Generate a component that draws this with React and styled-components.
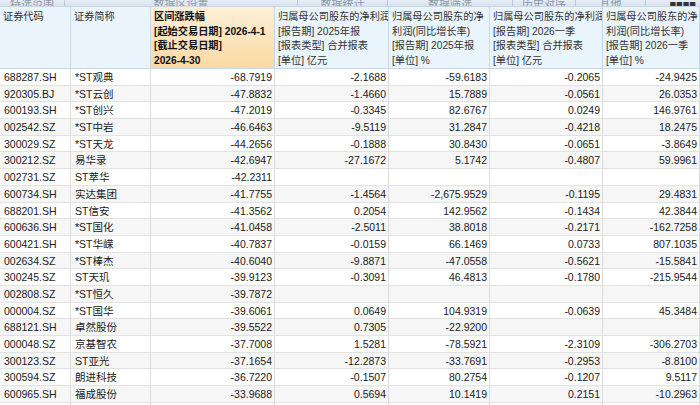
import React from "react";
import styled, { createGlobalStyle } from "styled-components";

const G = createGlobalStyle`
  body { margin: 0; background: #fff; overflow: hidden; }
  * { box-sizing: border-box; }
`;

const cols = "71px 80px 124px 114px 101px 113px 97px";

const Page = styled.div`
  width: 700px; height: 405px; overflow: hidden;
  font-family: "Liberation Sans", "Noto Sans CJK SC", sans-serif;
  font-size: 10.5px; color: #1a1a1a;
`;
const TopBar = styled.div`
  height: 7px; overflow: hidden; display: flex;
  background: linear-gradient(#e6eef7, #d8e3ef);
  border-bottom: 1px solid #c9d6e3;
`;
const TopItem = styled.div`
  width: ${p => p.w}px; border-right: 1px solid #b8c8d9;
  color: #8a98a8; font-size: 11px; line-height: 8px; text-align: center;
  font-weight: ${p => (p.bold ? 700 : 400)};
  ${p => p.bold && "color:#333;text-align:right;padding-right:4px;border-right:none;"}
`;
const Grid = styled.div`
  display: grid; grid-template-columns: ${cols};
`;
const Head = styled.div`
  height: 62px; padding: 3px 2px 0 3px; line-height: 14.5px; font-size: 10.2px;
  border-right: 1px solid #c5d9ea; border-bottom: 1px solid #c5d9ea;
  background: ${p => (p.sel ? "linear-gradient(#fdf0d8, #fbd9a2)" : "#eaf4fc")};
  font-weight: ${p => (p.sel ? 700 : 400)};
  color: ${p => (p.sel ? "#111" : "#333")};
  white-space: nowrap; overflow: hidden;
`;
const Cell = styled.div`
  height: 16.7px; line-height: 16.7px; padding: 0 ${p => (p.r ? "2px" : "4px")};
  text-align: ${p => (p.r ? "right" : "left")};
  background: ${p => (p.alt ? "#f6f6f6" : "#fff")};
  border-right: 1px solid #dcdcdc; border-bottom: 1px solid #e2e2e2;
  white-space: nowrap; overflow: hidden;
`;

const data = [
  ["688287.SH","*ST观典","-68.7919","-2.1688","-59.6183","-0.2065","-24.9425"],
  ["920305.BJ","*ST云创","-47.8832","-1.4660","15.7889","-0.0561","26.0353"],
  ["600193.SH","*ST创兴","-47.2019","-0.3345","82.6767","0.0249","146.9761"],
  ["002542.SZ","*ST中岩","-46.6463","-9.5119","31.2847","-0.4218","18.2475"],
  ["300029.SZ","*ST天龙","-44.2656","-0.1888","30.8430","-0.0651","-3.8649"],
  ["300212.SZ","易华录","-42.6947","-27.1672","5.1742","-0.4807","59.9961"],
  ["002731.SZ","ST萃华","-42.2311","","","",""],
  ["600734.SH","实达集团","-41.7755","-1.4564","-2,675.9529","-0.1195","29.4831"],
  ["688201.SH","ST信安","-41.3562","0.2054","142.9562","-0.1434","42.3844"],
  ["600636.SH","*ST国化","-41.0458","-2.5011","38.8018","-0.2171","-162.7258"],
  ["600421.SH","*ST华嵘","-40.7837","-0.0159","66.1469","0.0733","807.1035"],
  ["002634.SZ","*ST棒杰","-40.6040","-9.8871","-47.0558","-0.5621","-15.5841"],
  ["300245.SZ","ST天玑","-39.9123","-0.3091","46.4813","-0.1780","-215.9544"],
  ["002808.SZ","*ST恒久","-39.7872","","","",""],
  ["000004.SZ","*ST国华","-39.6061","0.0649","104.9319","-0.0639","45.3484"],
  ["688121.SH","卓然股份","-39.5522","0.7305","-22.9200","",""],
  ["000048.SZ","京基智农","-37.7008","1.5281","-78.5921","-2.3109","-306.2703"],
  ["300123.SZ","ST亚光","-37.1654","-12.2873","-33.7691","-0.2953","-8.8100"],
  ["300594.SZ","朗进科技","-36.7220","-0.1507","80.2754","-0.1207","9.5117"],
  ["600965.SH","福成股份","-33.9688","0.5694","10.1419","0.2151","-10.2963"],
  ["","","","","","",""],
];

const heads = [
  ["证券代码"],
  ["证券简称"],
  ["区间涨跌幅","[起始交易日期] 2026-4-1","[截止交易日期]","2026-4-30"],
  ["归属母公司股东的净利润","[报告期] 2025年报","[报表类型] 合并报表","[单位] 亿元"],
  ["归属母公司股东的净","利润(同比增长率)","[报告期] 2025年报","[单位] %"],
  ["归属母公司股东的净利润","[报告期] 2026一季","[报表类型] 合并报表","[单位] 亿元"],
  ["归属母公司股东的净","利润(同比增长率)","[报告期] 2026一季","[单位] %"],
];

const top = [[65,"特选范围"],[233,"数据区设置"],[90,"数据统计"],[125,"数据筛选"],[63,"历史对序"],[70,"其他"],[54,"■■■■",true]];

export default function App() {
  return (
    <Page>
      <G />
      <TopBar>{top.map(([w,t,b],i)=><TopItem key={i} w={w} bold={b}>{t}</TopItem>)}</TopBar>
      <Grid>
        {heads.map((h,i)=>(
          <Head key={i} sel={i===2}>{h.map((l,j)=><div key={j}>{l}</div>)}</Head>
        ))}
        {data.map((row,ri)=>row.map((v,ci)=>(
          <Cell key={ri+"-"+ci} r={ci>1} alt={ri%2===1}>{v}</Cell>
        )))}
      </Grid>
    </Page>
  );
}
